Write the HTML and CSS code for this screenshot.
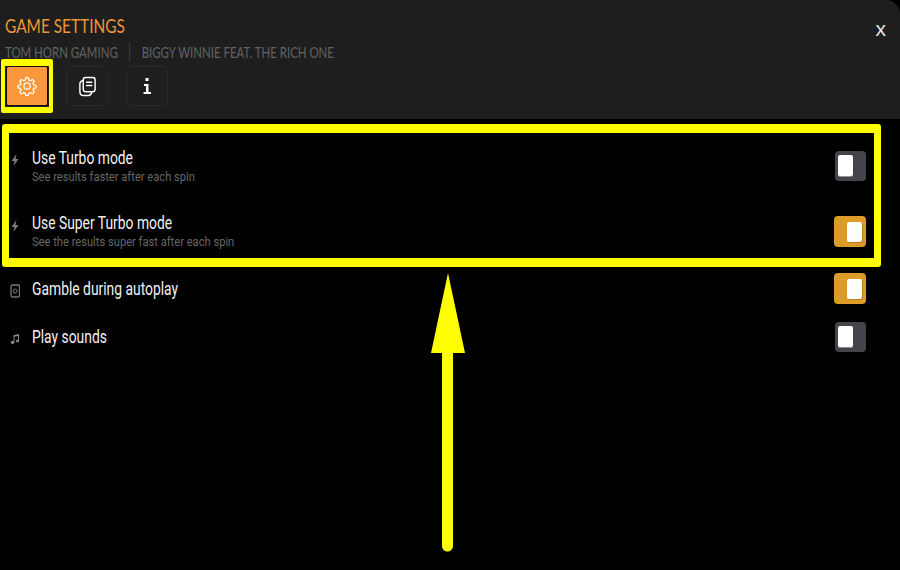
FILE: index.html
```html
<!DOCTYPE html>
<html lang="en">
<head>
<meta charset="utf-8">
<title>Game settings</title>
<link rel="stylesheet" href="styles.css">
</head>
<body>
<div class="page">
  <header class="head">
    <div class="head-text">
      <h1 class="title">GAME SETTINGS</h1>
      <div class="sub"><span>TOM HORN GAMING</span><i class="sep"></i><span>BIGGY WINNIE FEAT. THE RICH ONE</span></div>
    </div>
    <nav class="tabs">
      <button class="tab active"><svg viewBox="0 0 24 24" width="20" height="20" fill="none" stroke="#fff" stroke-width="1.500" stroke-linejoin="round"><path d="M10.600 2h2.800l.7 2.800 2 .8 2.500-1.500 2.100 2.100-1.500 2.500.8 2 2.800.7v2.800l-2.800.7-.8 2 1.500 2.500-2.100 2.100-2.500-1.500-2 .8-.7 2.800h-2.800l-.7-2.800-2-.8-2.500 1.500-2.100-2.100 1.500-2.500-.8-2-2.800-.7v-2.800l2.800-.7.8-2-1.500-2.500 2.100-2.100 2.500 1.500 2-.8z"/><circle cx="12" cy="12" r="3.800"/></svg></button>
      <button class="tab"><svg viewBox="0 0 20 22" width="19" height="21" fill="none" stroke="#fff" stroke-width="1.500" stroke-linejoin="round" stroke-linecap="round"><rect x="5.500" y="1.500" width="12.500" height="15" rx="2.500"/><path d="M9 6.500h5.500M9 10h5.500"/><path d="M5.500 4.500C3 5 2 6 2 8v8.500C2 19 3.500 20.500 6 20.500h5c2 0 3-1 3.500-3.500"/></svg></button>
      <button class="tab"><svg viewBox="0 0 12 18" width="12" height="18" fill="#fff"><rect x="4.500" y="1" width="3" height="3"/><path d="M3 7h4.500v8H10v2H2.500v-2h2.500V9H3z"/></svg></button>
    </nav>
    <button class="close">x</button>
  </header>

  <main class="list">
    <div class="row tall">
      <svg class="ico" viewBox="0 0 10 12" width="10" height="12"><path fill="#7c7c7c" d="M6.500 0 1.500 7H4.500L3.500 12 8.500 5H5.500z"/></svg>
      <div class="text"><div class="label">Use Turbo mode</div><div class="desc">See results faster after each spin</div></div>
      <span class="toggle"><span class="knob"></span></span>
    </div>
    <div class="row tall">
      <svg class="ico" viewBox="0 0 10 12" width="10" height="12"><path fill="#7c7c7c" d="M6.500 0 1.500 7H4.500L3.500 12 8.500 5H5.500z"/></svg>
      <div class="text"><div class="label">Use Super Turbo mode</div><div class="desc">See the results super fast after each spin</div></div>
      <span class="toggle on"><span class="knob"></span></span>
    </div>
    <div class="row">
      <svg class="ico" viewBox="0 0 10 14" width="10" height="14" fill="none" stroke="#777"><rect x="1" y="1" width="8.500" height="12" rx="1.500" stroke-width="1.300"/><circle cx="5.200" cy="7" r="2"/></svg>
      <div class="text"><div class="label">Gamble during autoplay</div></div>
      <span class="toggle on"><span class="knob"></span></span>
    </div>
    <div class="row">
      <svg class="ico" viewBox="0 0 10 12" width="10" height="12" fill="#8a8a8a"><path d="M3.500 2.200 9 1v7h-1V3L4.500 3.800V9.500h-1z"/><ellipse cx="2.500" cy="9.500" rx="1.800" ry="1.400"/><ellipse cx="7.500" cy="8" rx="1.600" ry="1.300"/></svg>
      <div class="text"><div class="label">Play sounds</div></div>
      <span class="toggle"><span class="knob"></span></span>
    </div>
  </main>

  <div class="mark mark-tab"></div>
  <div class="mark mark-rows"></div>
  <svg class="arrow" viewBox="0 0 40 290" width="40" height="290"><path fill="#ffff00" d="M20 0 37 80H25V273a5.500 5.500 0 0 1-11 0V80H3z"/></svg>
</div>
</body>
</html>
```

FILE: styles.css
```css
* { box-sizing: border-box; }
html, body { margin: 0; padding: 0; background: #000; }
.page {
  position: relative;
  width: 900px;
  height: 570px;
  overflow: hidden;
  background: #000;
  font-family: Roboto, "Liberation Sans", sans-serif;
}
.head {
  position: relative;
  height: 119px;
  padding: 14px 5px 0;
  background: #1e1e1e;
  border-top-right-radius: 14px;
  display: flex;
  flex-direction: column;
}
.title {
  margin: 0;
  font: 400 20px/23px Lato, sans-serif;
  color: #ef9538;
  transform: scaleX(0.77);
  transform-origin: left center;
}
.sub {
  margin-top: 3px;
  height: 24px;
  display: flex;
  align-items: center;
  font: 400 16px/24px Lato, sans-serif;
  color: #626365;
  white-space: nowrap;
  transform: scaleX(0.715);
  transform-origin: left center;
}
.sep {
  flex: none;
  width: 1.400px;
  height: 20px;
  margin: 0 16px;
  background: #4a4a4a;
}
.tabs {
  display: flex;
  gap: 18px;
  margin-top: 2px;
  padding-left: 1px;
}
.tab {
  width: 42px;
  height: 40px;
  padding: 0;
  display: flex;
  align-items: center;
  justify-content: center;
  background: transparent;
  border: 1px solid #2a2a2a;
  border-radius: 5px;
}
.tab.active {
  background: #fb973c;
  background-clip: padding-box;
  border-color: #111;
  border-radius: 2px;
}
.close {
  position: absolute;
  top: 17px;
  right: 14px;
  padding: 0;
  border: 0;
  background: none;
  color: #e4e4e4;
  font: 400 21px/24px "Liberation Sans", sans-serif;
}
.list {
  padding: 14px 34px 0 10px;
  display: flex;
  flex-direction: column;
}
.row {
  height: 48.500px;
  display: flex;
  align-items: center;
}
.row.tall { height: 65.500px; }
.ico {
  flex: none;
  align-self: flex-start;
  margin: 20px 12px 0 0;
}
.row.tall .ico { margin-top: 21px; }
.text { flex: 1; }
.label, .desc {
  white-space: nowrap;
  transform-origin: left center;
}
.label {
  font-size: 18px;
  line-height: 21px;
  color: #f2f2f2;
  transform: scaleX(0.77);
}
.desc {
  font-size: 13px;
  line-height: 17px;
  color: #666;
  transform: scaleX(0.857);
}
.toggle {
  flex: none;
  width: 31px;
  height: 30px;
  padding: 4px 13px 5px 3px;
  background: #43454a;
  border-radius: 4px;
  display: block;
}
.toggle.on {
  width: 32px;
  height: 31px;
  padding: 6px 4px 5px 13px;
  background: #dd9b27;
}
.knob {
  display: block;
  width: 15px;
  height: 100%;
  background: #fff;
  border-radius: 2px;
  box-shadow: 0 1px 0 #8f8f8f;
}
.on .knob { box-shadow: 1px 1px 0 #b87f1c; }
.mark { position: absolute; border-style: solid; border-color: #ffff00; }
.mark-tab {
  left: 1px;
  top: 59px;
  width: 52px;
  height: 54px;
  border-width: 7px 4px 6px;
  border-radius: 2px;
}
.mark-rows {
  left: 2px;
  top: 124px;
  width: 879px;
  height: 143px;
  border-width: 9px 7px;
  border-radius: 3px;
}
.arrow { position: absolute; left: 428px; top: 273px; }
```
